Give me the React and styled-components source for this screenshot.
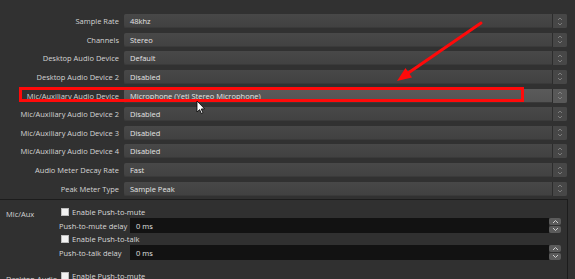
import React from "react";
import styled, { createGlobalStyle } from "styled-components";

const Global = createGlobalStyle`
  html, body {
    margin: 0;
    padding: 0;
    background: #2f2f2f;
    overflow: hidden;
  }
  body {
    font-family: "Open Sans", "DejaVu Sans", sans-serif;
    font-size: 7.5px;
    color: #d8d8d8;
  }
`;

const Page = styled.div`
  position: relative;
  width: 575px;
  height: 279px;
  overflow: hidden;
  background: #313131;
`;

const Form = styled.div`
  display: grid;
  grid-template-columns: 124px 443px;
  grid-auto-rows: 14px;
  row-gap: 4.65px;
  padding-top: 14px;
`;

const Label = styled.div`
  display: flex;
  align-items: center;
  justify-content: flex-end;
  padding-right: 5px;
  white-space: nowrap;
  color: #d4d4d4;
`;

const Combo = styled.div`
  position: relative;
  display: flex;
  align-items: stretch;
  border-radius: 2px;
  background: ${(p) =>
    p.$hot
      ? "linear-gradient(#5a5a5a, #535353)"
      : "linear-gradient(#484848, #414141)"};
  box-shadow: inset 0 -1px 0 #3a3a3a;
`;

const ComboText = styled.div`
  flex: 1;
  display: flex;
  align-items: center;
  padding-left: 6px;
  color: #e4e4e4;
  white-space: nowrap;
`;

const ComboButton = styled.div`
  width: 14px;
  display: flex;
  align-items: center;
  justify-content: center;
  border-left: 1px solid #2c2c2c;
  background: ${(p) => (p.$hot ? "#585858" : "#474747")};
  border-radius: 0 2px 2px 0;
`;

const Highlight = styled.div`
  position: absolute;
  left: 19px;
  top: 87px;
  width: 505px;
  height: 15px;
  box-sizing: border-box;
  border: 3px solid #ff0a0a;
  pointer-events: none;
`;

const Overlay = styled.svg`
  position: absolute;
  left: 0;
  top: 0;
  pointer-events: none;
`;

const Group = styled.div`
  margin-top: 3.5px;
  width: 568px;
  box-sizing: border-box;
  border-top: 1px solid #1c1c1c;
  border-right: 1px solid #1c1c1c;
  padding-top: 6px;
  background: #303030;
  height: 90px;
`;

const Block = styled.div`
  display: grid;
  grid-template-columns: 59px 1fr;
  margin-bottom: ${(p) => p.$gap || 0}px;
`;

const BlockName = styled.div`
  padding-left: 6px;
  padding-top: ${(p) => p.$drop || 3}px;
  white-space: nowrap;
  color: #d4d4d4;
`;

const Rows = styled.div`
  display: flex;
  flex-direction: column;
`;

const CheckRow = styled.div`
  height: 12px;
  display: flex;
  align-items: center;
  padding-left: 2px;
  gap: 3px;
  color: #dadada;
`;

const Box = styled.span`
  width: 8px;
  height: 8px;
  background: #f2f2f2;
  border: 1px solid #bdbdbd;
  box-sizing: border-box;
`;

const SpinRow = styled.div`
  height: 15px;
  display: grid;
  grid-template-columns: 71px 419px 12px;
  align-items: stretch;
`;

const SpinLabel = styled.div`
  display: flex;
  align-items: center;
  white-space: nowrap;
  color: #d8d8d8;
`;

const SpinField = styled.div`
  background: #121212;
  display: flex;
  align-items: center;
  padding-left: 6px;
  color: #e0e0e0;
`;

const SpinButtons = styled.div`
  display: flex;
  flex-direction: column;
  gap: 1px;
`;

const SpinBtn = styled.div`
  flex: 1;
  background: #5b5b5b;
  border-radius: 2px;
  display: flex;
  align-items: center;
  justify-content: center;
`;

const Updown = () => (
  <svg width="6" height="9" viewBox="0 0 6 9">
    <path d="M1 3 L3 1 L5 3 M1 6 L3 8 L5 6" fill="none" stroke="#8a8a8a" strokeWidth="0.8" />
  </svg>
);

const Chevron = ({ up }) => (
  <svg width="7" height="5" viewBox="0 0 7 5">
    <path d={up ? "M1 4 L3.5 1.5 L6 4" : "M1 1 L3.5 3.5 L6 1"} fill="none" stroke="#cfcfcf" strokeWidth="1" />
  </svg>
);

const fields = [
  ["Sample Rate", "48khz"],
  ["Channels", "Stereo"],
  ["Desktop Audio Device", "Default"],
  ["Desktop Audio Device 2", "Disabled"],
  ["Mic/Auxiliary Audio Device", "Microphone (Yeti Stereo Microphone)", true],
  ["Mic/Auxiliary Audio Device 2", "Disabled"],
  ["Mic/Auxiliary Audio Device 3", "Disabled"],
  ["Mic/Auxiliary Audio Device 4", "Disabled"],
  ["Audio Meter Decay Rate", "Fast"],
  ["Peak Meter Type", "Sample Peak"],
];

function Spin({ label }) {
  return (
    <SpinRow>
      <SpinLabel>{label}</SpinLabel>
      <SpinField>0 ms</SpinField>
      <SpinButtons>
        <SpinBtn><Chevron up /></SpinBtn>
        <SpinBtn><Chevron /></SpinBtn>
      </SpinButtons>
    </SpinRow>
  );
}

export default function App() {
  return (
    <Page>
      <Global />
      <Form>
        {fields.map(([label, value, hot]) => (
          <React.Fragment key={label}>
            <Label>{label}</Label>
            <Combo $hot={hot}>
              <ComboText>{value}</ComboText>
              <ComboButton $hot={hot}><Updown /></ComboButton>
            </Combo>
          </React.Fragment>
        ))}
      </Form>
      <Group>
        <Block $gap={10}>
          <BlockName>Mic/Aux</BlockName>
          <Rows>
            <CheckRow><Box />Enable Push-to-mute</CheckRow>
            <Spin label="Push-to-mute delay" />
            <CheckRow><Box />Enable Push-to-talk</CheckRow>
            <Spin label="Push-to-talk delay" />
          </Rows>
        </Block>
        <Block>
          <BlockName $drop={4}>Desktop Audio</BlockName>
          <Rows>
            <CheckRow><Box />Enable Push-to-mute</CheckRow>
          </Rows>
        </Block>
      </Group>
      <Highlight />
      <Overlay width="575" height="279" viewBox="0 0 575 279">
        <line x1="481" y1="23" x2="406" y2="74.5" stroke="#ff0a0a" strokeWidth="3" strokeLinecap="round" />
        <polygon points="397,81 412,77.5 405.5,68" fill="#ff0a0a" />
        <path
          d="M197 101 L197 112 L199.6 109.6 L201.4 113.6 L203 112.9 L201.2 109 L204.6 108.8 Z"
          fill="#ffffff"
          stroke="#000000"
          strokeWidth="0.8"
          strokeLinejoin="round"
        />
      </Overlay>
    </Page>
  );
}
